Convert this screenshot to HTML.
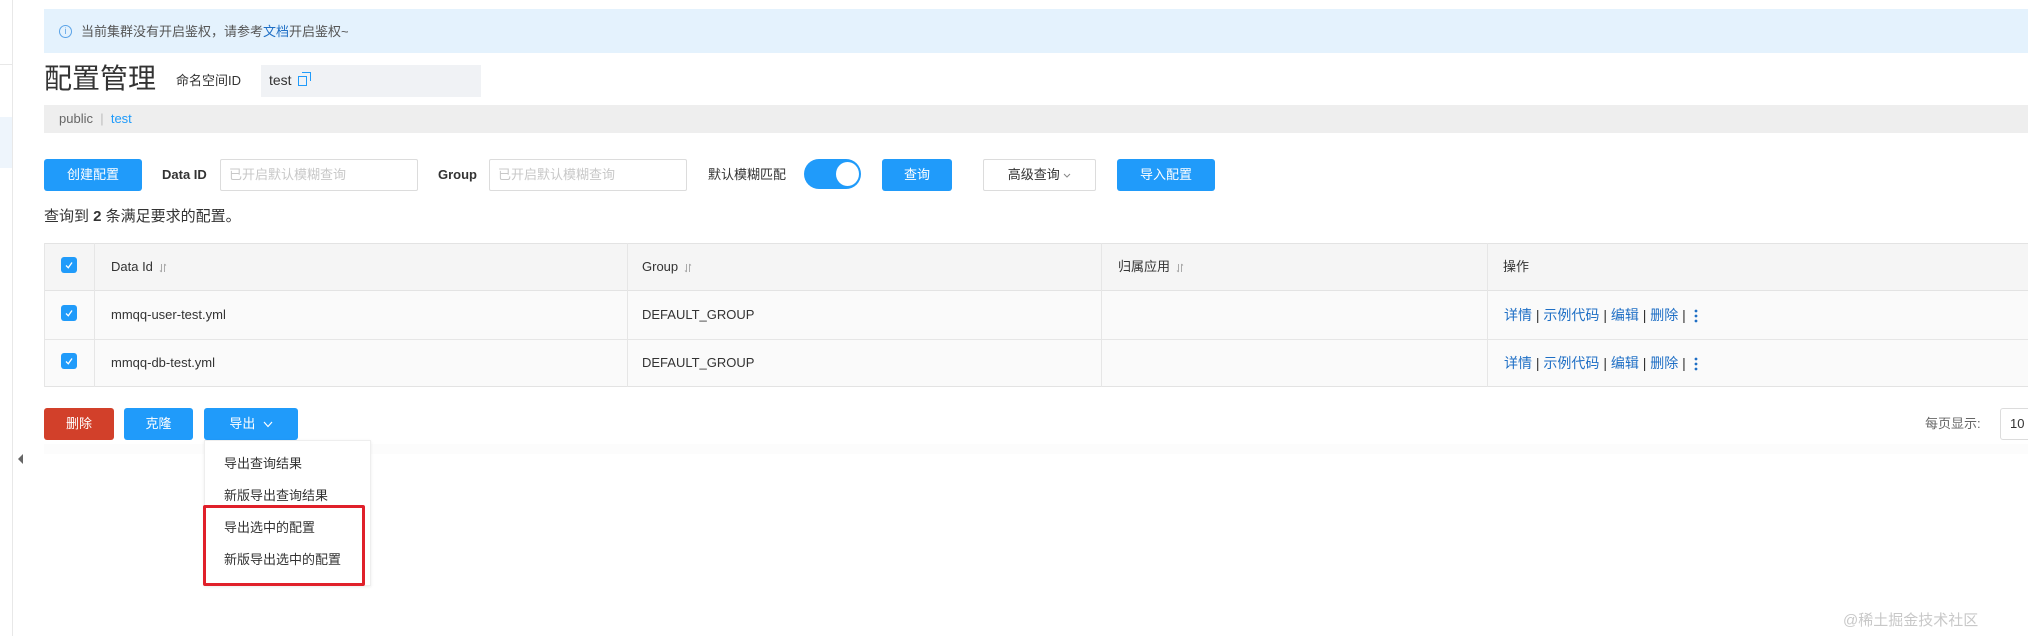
<!DOCTYPE html>
<html><head><meta charset="utf-8"><style>
*{box-sizing:border-box;margin:0;padding:0}
body{width:2028px;height:636px;background:#fff;position:relative;overflow:hidden;font-family:"Liberation Sans","Noto Sans CJK SC",sans-serif;color:#333}
.a{position:absolute}
.btn{position:absolute;height:32px;border-radius:3px;color:#fff;font-size:13px;line-height:32px;text-align:center;background:#209bfa}
.inp{position:absolute;height:32px;border:1px solid #dcdcdc;border-radius:2px;font-size:13px;color:#c8c8c8;padding-left:8px;line-height:30px}
.lbl{position:absolute;font-size:13px;font-weight:bold;color:#333;line-height:32px;height:32px}
.cb{position:absolute;width:16px;height:16px;border-radius:3px;background:#209bfa}
.cb svg{display:block}
.t{position:absolute;font-size:13px;color:#333;line-height:48px;height:48px;white-space:nowrap}
.m{position:absolute;font-size:13px;color:#333;line-height:32px;height:32px;white-space:nowrap}
.lk{position:absolute;font-size:14px;color:#1f6fc5;white-space:pre;line-height:48px;height:48px}
.s{display:inline-block;vertical-align:middle;margin-left:6px}
</style></head><body>
<div class="a" style="left:12px;top:0;width:1px;height:636px;background:#e8e8e8"></div>
<div class="a" style="left:0;top:117px;width:12px;height:51px;background:#eef5fc"></div>
<div class="a" style="left:0;top:64px;width:12px;height:1px;background:#e8e8e8"></div>
<div class="a" style="left:44px;top:9px;width:1984px;height:44px;background:#e4f2fd"></div>
<div class="a" style="left:59px;top:25px;width:13px;height:13px;border:1px solid #5aa3e8;border-radius:50%;font-size:9px;color:#5aa3e8;text-align:center;line-height:11px">i</div>
<div class="a" style="left:81px;top:22px;font-size:13px;color:#555;line-height:20px">当前集群没有开启鉴权，请参考<span style="color:#1f6fc5">文档</span>开启鉴权~</div>
<div class="a" style="left:44px;top:62px;font-size:28px;line-height:34px;color:#333">配置管理</div>
<div class="a" style="left:176px;top:71px;font-size:13px;color:#333;line-height:20px">命名空间ID</div>
<div class="a" style="left:261px;top:65px;width:220px;height:32px;background:#f0f2f5"></div>
<div class="a" style="left:269px;top:70px;font-size:14px;color:#333;line-height:20px">test</div>
<div class="a" style="left:298px;top:76px;width:9px;height:10px;border:1px solid #209bfa"></div>
<div class="a" style="left:302px;top:72px;width:9px;height:9px;border-top:1px solid #209bfa;border-right:1px solid #209bfa"></div>
<div class="a" style="left:44px;top:105px;width:1984px;height:28px;background:#eeeeee"></div>
<div class="a" style="left:59px;top:105px;font-size:13px;color:#666;line-height:28px">public &nbsp;<span style="color:#bbb">|</span>&nbsp; <span style="color:#209bfa">test</span></div>
<div class="btn" style="left:44px;top:159px;width:98px">创建配置</div>
<div class="lbl" style="left:162px;top:159px">Data ID</div>
<div class="inp" style="left:220px;top:159px;width:198px">已开启默认模糊查询</div>
<div class="lbl" style="left:438px;top:159px">Group</div>
<div class="inp" style="left:489px;top:159px;width:198px">已开启默认模糊查询</div>
<div class="lbl" style="left:708px;top:159px;font-weight:normal">默认模糊匹配</div>
<div class="a" style="left:804px;top:159px;width:57px;height:30px;border-radius:15px;background:#209bfa"></div>
<div class="a" style="left:836px;top:162px;width:23px;height:24px;border-radius:50%;background:#fff"></div>
<div class="btn" style="left:882px;top:159px;width:70px">查询</div>
<div class="a" style="left:983px;top:159px;width:113px;height:32px;border:1px solid #dcdcdc;border-radius:2px;font-size:13px;color:#333;text-align:center;line-height:30px">高级查询 <svg width="8" height="6" style="vertical-align:middle"><path d="M1 1L4 4L7 1" fill="none" stroke="#888" stroke-width="1"/></svg></div>
<div class="btn" style="left:1117px;top:159px;width:98px">导入配置</div>
<div class="a" style="left:44px;top:207px;font-size:15px;color:#333;line-height:20px">查询到 <b>2</b> 条满足要求的配置。</div>
<div class="a" style="left:44px;top:243px;width:1984px;height:48px;background:#f5f5f5;border-top:1px solid #e3e3e3;border-bottom:1px solid #e3e3e3"></div>
<div class="a" style="left:44px;top:291px;width:1984px;height:96px;background:#fafafa;border-bottom:1px solid #e3e3e3"></div>
<div class="a" style="left:44px;top:339px;width:1984px;height:1px;background:#e6e6e6"></div>
<div class="a" style="left:44px;top:243px;width:1px;height:144px;background:#e6e6e6"></div>
<div class="a" style="left:94px;top:243px;width:1px;height:144px;background:#e6e6e6"></div>
<div class="a" style="left:627px;top:243px;width:1px;height:144px;background:#e6e6e6"></div>
<div class="a" style="left:1101px;top:243px;width:1px;height:144px;background:#e6e6e6"></div>
<div class="a" style="left:1487px;top:243px;width:1px;height:144px;background:#e6e6e6"></div>
<div class="cb" style="left:61px;top:257px"><svg width="16" height="16"><path d="M5 8.5L7.3 10.8L11 5.5" fill="none" stroke="#fff" stroke-width="1.3"/></svg></div>
<div class="cb" style="left:61px;top:305px"><svg width="16" height="16"><path d="M5 8.5L7.3 10.8L11 5.5" fill="none" stroke="#fff" stroke-width="1.3"/></svg></div>
<div class="cb" style="left:61px;top:353px"><svg width="16" height="16"><path d="M5 8.5L7.3 10.8L11 5.5" fill="none" stroke="#fff" stroke-width="1.3"/></svg></div>
<div class="t" style="left:111px;top:243px">Data Id<svg class="s" width="8" height="10"><path d="M2.5 1V9M1 7.5L2.5 9M5.5 1V9M5.5 1L7 2.5" fill="none" stroke="#aaa" stroke-width="1"/></svg></div>
<div class="t" style="left:642px;top:243px">Group<svg class="s" width="8" height="10"><path d="M2.5 1V9M1 7.5L2.5 9M5.5 1V9M5.5 1L7 2.5" fill="none" stroke="#aaa" stroke-width="1"/></svg></div>
<div class="t" style="left:1118px;top:243px">归属应用<svg class="s" width="8" height="10"><path d="M2.5 1V9M1 7.5L2.5 9M5.5 1V9M5.5 1L7 2.5" fill="none" stroke="#aaa" stroke-width="1"/></svg></div>
<div class="t" style="left:1503px;top:243px">操作</div>
<div class="t" style="left:111px;top:291px">mmqq-user-test.yml</div>
<div class="t" style="left:642px;top:291px">DEFAULT_GROUP</div>
<div class="t" style="left:111px;top:339px">mmqq-db-test.yml</div>
<div class="t" style="left:642px;top:339px">DEFAULT_GROUP</div>
<div class="lk" style="left:1504px;top:291px">详情 <span style="color:#333">|</span> 示例代码 <span style="color:#333">|</span> 编辑 <span style="color:#333">|</span> 删除 <span style="color:#333">|</span>  <svg width="4" height="14" style="vertical-align:middle"><circle cx="2" cy="2" r="1.4" fill="#1f6fc5"/><circle cx="2" cy="7" r="1.4" fill="#1f6fc5"/><circle cx="2" cy="12" r="1.4" fill="#1f6fc5"/></svg></div>
<div class="lk" style="left:1504px;top:339px">详情 <span style="color:#333">|</span> 示例代码 <span style="color:#333">|</span> 编辑 <span style="color:#333">|</span> 删除 <span style="color:#333">|</span>  <svg width="4" height="14" style="vertical-align:middle"><circle cx="2" cy="2" r="1.4" fill="#1f6fc5"/><circle cx="2" cy="7" r="1.4" fill="#1f6fc5"/><circle cx="2" cy="12" r="1.4" fill="#1f6fc5"/></svg></div>
<div class="btn" style="left:44px;top:408px;width:70px;background:#d2402a">删除</div>
<div class="btn" style="left:124px;top:408px;width:69px">克隆</div>
<div class="btn" style="left:204px;top:408px;width:94px">导出 &nbsp;<svg width="10" height="7" style="vertical-align:middle"><path d="M1 1L5 5.5L9 1" fill="none" stroke="#fff" stroke-width="1.2"/></svg></div>
<div class="a" style="left:44px;top:444px;width:1984px;height:10px;background:#fcfcfc"></div>
<div class="a" style="left:18px;top:454px;width:0;height:0;border-top:5px solid transparent;border-bottom:5px solid transparent;border-right:5px solid #666"></div>
<div class="a" style="left:204px;top:440px;width:167px;height:146px;background:#fff;border:1px solid #eee;box-shadow:0 1px 3px rgba(0,0,0,.08)"></div>
<div class="m" style="left:224px;top:448px">导出查询结果</div>
<div class="m" style="left:224px;top:480px">新版导出查询结果</div>
<div class="m" style="left:224px;top:512px">导出选中的配置</div>
<div class="m" style="left:224px;top:544px">新版导出选中的配置</div>
<div class="a" style="left:203px;top:505px;width:162px;height:81px;border:3px solid #e0202a;border-radius:2px"></div>
<div class="m" style="left:1925px;top:408px;color:#666">每页显示:</div>
<div class="a" style="left:2000px;top:408px;width:40px;height:32px;border:1px solid #dcdcdc;border-radius:3px;font-size:13px;color:#333;padding-left:9px;line-height:30px">10</div>
<div class="a" style="left:1843px;top:611px;font-size:15px;color:#c8c8c8;line-height:20px">@稀土掘金技术社区</div>
</body></html>
